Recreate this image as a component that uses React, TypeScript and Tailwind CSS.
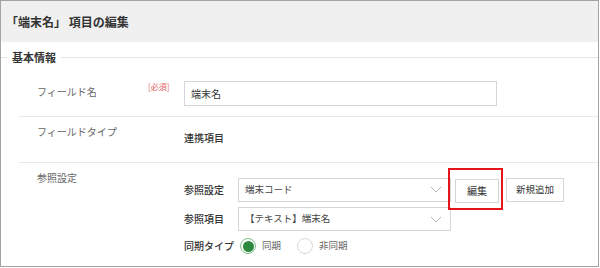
import React from 'react';

const font = { fontFamily: '"Noto Sans CJK JP", "Noto Sans", sans-serif' };

function Chevron() {
  return (
    <svg width="12" height="7" viewBox="0 0 12 7" className="shrink-0">
      <path d="M1 1 L6 6 L11 1" fill="none" stroke="#b5b5b5" strokeWidth="1" />
    </svg>
  );
}

function Select({ value }: { value: string }) {
  return (
    <div className="w-[213px] h-[24px] border border-[#d6d6d6] bg-white flex items-center justify-between pl-[6px] pr-[8px]">
      <span className="text-[9.5px] text-[#444] leading-none">{value}</span>
      <Chevron />
    </div>
  );
}

function Radio({ checked, label }: { checked?: boolean; label: string }) {
  return (
    <label className="flex items-center gap-[6px]">
      {checked ? (
        <span className="w-[16px] h-[16px] rounded-full border border-[#7fbf8a] bg-white flex items-center justify-center">
          <span className="w-[11px] h-[11px] rounded-full bg-[#2d8a3e]" />
        </span>
      ) : (
        <span className="w-[16px] h-[16px] rounded-full border border-[#d9d9d9] bg-white" />
      )}
      <span className="text-[9.5px] text-[#666] leading-none">{label}</span>
    </label>
  );
}

export default function App() {
  return (
    <div style={font} className="w-[600px] h-[268px] bg-white">
      <div className="w-[599px] h-[267px] border border-[#a3a3a3] flex flex-col">
        {/* header */}
        <div className="h-[41px] bg-[#f0f0f0] flex items-center pl-[5px]">
          <h1 className="text-[12px] font-bold text-[#333] leading-none">「端末名」 項目の編集</h1>
        </div>

        {/* section legend */}
        <div className="h-[20px] mt-[5px] flex items-center">
          <span className="w-[6px] h-px bg-[#e6e6e6]" />
          <span className="px-[5px] text-[11px] font-bold text-[#333] leading-none">基本情報</span>
          <span className="flex-1 h-px bg-[#e6e6e6]" />
        </div>

        {/* field name */}
        <div className="ml-[18px] border-b border-[#e8e8e8] flex items-start pt-[14px] pb-[10px]">
          <span className="w-[129px] pl-[18px] mt-[4px] text-[10px] leading-[14px] text-[#666]">フィールド名</span>
          <span className="w-[36px] text-[8px] leading-[12px] text-[#e26262]">[必須]</span>
          <div className="w-[313px] h-[25px] border border-[#d6d6d6] flex items-center pl-[6px]">
            <span className="text-[10px] text-[#333] leading-none">端末名</span>
          </div>
        </div>

        {/* field type */}
        <div className="ml-[18px] h-[46px] border-b border-[#e8e8e8] flex items-start pt-[8px]">
          <span className="w-[165px] pl-[18px] text-[10px] leading-[14px] text-[#666]">フィールドタイプ</span>
          <span className="mt-[6px] text-[10px] leading-[14px] font-medium text-[#333]">連携項目</span>
        </div>

        {/* reference */}
        <div className="ml-[18px] flex items-start pt-[8px]">
          <span className="w-[165px] pl-[18px] text-[10px] leading-[14px] text-[#666]">参照設定</span>
          <div className="flex flex-col gap-[4px] pt-[5px]">
            <div className="flex items-center">
              <span className="w-[54px] text-[10px] font-medium text-[#333] leading-none">参照設定</span>
              <Select value="端末コード" />
              <div className="relative ml-[4px]">
                <button className="w-[44px] h-[24px] border border-[#d6d6d6] bg-white text-[10px] text-[#333] leading-none">編集</button>
                <span className="absolute -left-[7px] -right-[4px] -top-[8px] -bottom-[7px] border-2 border-[#e8141c] pointer-events-none" />
              </div>
              <button className="ml-[7px] w-[58px] h-[24px] border border-[#d6d6d6] bg-white text-[9.5px] text-[#333] leading-none">新規追加</button>
            </div>
            <div className="flex items-center">
              <span className="w-[54px] text-[10px] font-medium text-[#333] leading-none">参照項目</span>
              <Select value="【テキスト】端末名" />
            </div>
            <div className="flex items-center h-[22px]">
              <span className="w-[56px] text-[10px] font-medium text-[#333] leading-none">同期タイプ</span>
              <div className="flex items-center gap-[16px]">
                <Radio checked label="同期" />
                <Radio label="非同期" />
              </div>
            </div>
          </div>
        </div>
      </div>
    </div>
  );
}
